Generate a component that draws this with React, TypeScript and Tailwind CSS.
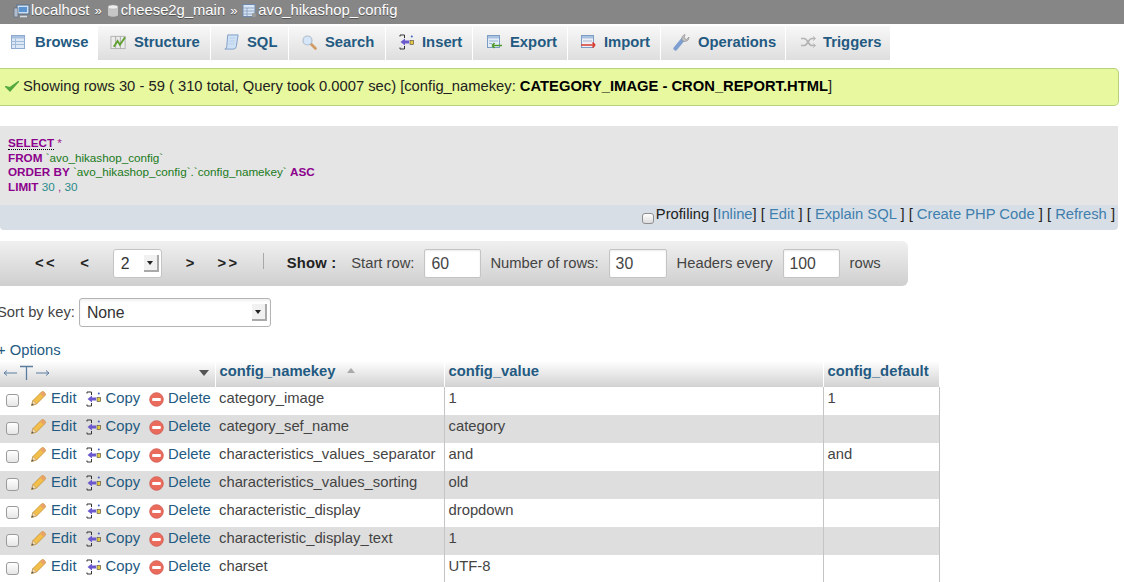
import React from "react";

const PencilIcon = () => (
  <svg width="17" height="17" viewBox="0 0 17 17" className="shrink-0">
    <path d="M1.5 15.5 L3 10.5 L11.5 2 Q13 1 14.5 2.5 Q16 4 15 5.5 L6.5 14 Z" fill="#f2c04a" stroke="#c08a30" strokeWidth="0.8" />
    <path d="M1.5 15.5 L3 10.5 L6.5 14 Z" fill="#f3dcb0" stroke="#b89058" strokeWidth="0.6" />
    <path d="M11.5 2 Q13 1 14.5 2.5 Q16 4 15 5.5 L13.6 6.9 L10.1 3.4 Z" fill="#e9a36b" />
    <path d="M1.5 15.5 L2.2 13.2 L3.8 14.8 Z" fill="#555" />
  </svg>
);

const CopyIcon = () => (
  <svg width="16" height="16" viewBox="0 0 16 16" className="shrink-0">
    <path d="M1 1 H5.5 V4 M5.5 12 V15 H1 M1 1 V2.5 M1 13.5 V15" stroke="#333" strokeWidth="1" fill="none" />
    <path d="M1.5 8 L6 4.5 V6.6 H10 V9.4 H6 V11.5 Z" fill="#6a5acd" />
    <rect x="11" y="6.5" width="3.6" height="4" fill="#e8c840" stroke="#444" strokeWidth="0.6" />
    <circle cx="12.8" cy="2.5" r="1" fill="#4060c0" />
  </svg>
);

const DeleteIcon = () => (
  <svg width="15" height="15" viewBox="0 0 15 15" className="shrink-0">
    <circle cx="7.5" cy="7.5" r="6.8" fill="#ea6a5c" stroke="#cf5a50" strokeWidth="0.8" />
    <rect x="3.2" y="6.1" width="8.6" height="2.8" rx="0.6" fill="#fff" />
  </svg>
);

const icons: Record<string, React.ReactNode> = {
  Browse: (
    <svg width="16" height="16" viewBox="0 0 16 16">
      <rect x="1.5" y="1.5" width="13" height="13" fill="#dce8f6" stroke="#8faace" />
      <rect x="2" y="2" width="12" height="2.5" fill="#a9c2e0" />
      <path d="M1.5 7.5 H14.5 M1.5 10.5 H14.5 M5.5 4.5 V14.5" stroke="#a3bcd9" strokeWidth="1" />
    </svg>
  ),
  Structure: (
    <svg width="18" height="16" viewBox="0 0 18 16">
      <rect x="1" y="2" width="15" height="13" fill="#ececec" stroke="#b0b0b0" />
      <path d="M6 2 V15 M11 2 V15" stroke="#a8a8a8" />
      <path d="M4 13 L8 7 L10.5 11 L16 3" stroke="#5fa030" strokeWidth="2" fill="none" />
    </svg>
  ),
  SQL: (
    <svg width="18" height="18" viewBox="0 0 18 18">
      <path d="M5 1.5 H16 L14 14 Q13.5 16.5 11 16.5 H2 Q4 16 4 14 Z" fill="#cfe1f5" stroke="#7c9cc6" />
      <path d="M7 5 H13 M6.5 8 H12.5 M6 11 H12" stroke="#b6cde8" />
    </svg>
  ),
  Search: (
    <svg width="16" height="16" viewBox="0 0 16 16">
      <path d="M9.5 9.5 L14.5 14.5" stroke="#d09a62" strokeWidth="2.6" strokeLinecap="round" />
      <circle cx="6.5" cy="6.5" r="4.5" fill="#d4e6f8" stroke="#b0bccb" strokeWidth="1.2" />
    </svg>
  ),
  Insert: <CopyIcon />,
  Export: (
    <svg width="17" height="16" viewBox="0 0 17 16">
      <rect x="1.5" y="1.5" width="12" height="12" fill="#e4eef8" stroke="#7d9cc4" />
      <rect x="2" y="2" width="11" height="2.5" fill="#a9c2e0" />
      <path d="M3 7 H12 M3 9.5 H6" stroke="#9ab4d4" />
      <path d="M16 11.5 H6 M6 11.5 L8.5 9 M6 11.5 L8.5 14" stroke="#4e9a2e" strokeWidth="1.7" fill="none" />
    </svg>
  ),
  Import: (
    <svg width="17" height="16" viewBox="0 0 17 16">
      <rect x="1.5" y="1.5" width="12" height="12" fill="#eef0f6" stroke="#7d9cc4" />
      <rect x="2" y="2" width="11" height="2.5" fill="#a9c2e0" />
      <path d="M3 7 H12" stroke="#a8b4cc" />
      <path d="M1 11 H15 M15 11 L12.5 8.5 M15 11 L12.5 13.5" stroke="#d83c30" strokeWidth="1.7" fill="none" />
    </svg>
  ),
  Operations: (
    <svg width="17" height="18" viewBox="0 0 17 18">
      <path d="M2.5 15.5 L9.5 7" stroke="#7e9fd0" strokeWidth="4.2" strokeLinecap="round" />
      <path d="M9 7 Q8 3 12 1.5 L11 5 L13.5 6.5 L16 4 Q16 8.5 11 8.5 Z" fill="#c4c4c4" stroke="#8f8f8f" strokeWidth="0.7" />
    </svg>
  ),
  Triggers: (
    <svg width="16" height="14" viewBox="0 0 16 14">
      <path d="M1 3.5 H4 Q6 3.5 8 7 Q10 10.5 12 10.5 H15 M1 10.5 H4 Q6 10.5 8 7 Q10 3.5 12 3.5 H15" stroke="#b4b4b4" strokeWidth="1.6" fill="none" />
      <path d="M13 1.5 L15.5 3.5 L13 5.5 M13 8.5 L15.5 10.5 L13 12.5" stroke="#b4b4b4" fill="none" />
    </svg>
  ),
};

const tabs = [
  { name: "Browse", w: "w-[98px]", gap: "gap-[9px]", pl: "pl-[9px]", active: true },
  { name: "Structure", w: "w-[113px]", gap: "gap-[7px]", pl: "pl-[12px]" },
  { name: "SQL", w: "w-[78px]", gap: "gap-[7px]", pl: "pl-[12px]" },
  { name: "Search", w: "w-[97px]", gap: "gap-[8px]", pl: "pl-[11px]" },
  { name: "Insert", w: "w-[87px]", gap: "gap-[7px]", pl: "pl-[12px]" },
  { name: "Export", w: "w-[95px]", gap: "gap-[7px]", pl: "pl-[13px]" },
  { name: "Import", w: "w-[93px]", gap: "gap-[7px]", pl: "pl-[12px]" },
  { name: "Operations", w: "w-[125px]", gap: "gap-[8px]", pl: "pl-[12px]" },
  { name: "Triggers", w: "w-[105px]", gap: "gap-[7px]", pl: "pl-[13px]" },
];

const rows = [
  ["category_image", "1", "1"],
  ["category_sef_name", "category", ""],
  ["characteristics_values_separator", "and", "and"],
  ["characteristics_values_sorting", "old", ""],
  ["characteristic_display", "dropdown", ""],
  ["characteristic_display_text", "1", ""],
  ["charset", "UTF-8", ""],
];

const SelectArrow = () => (
  <span className="flex h-[17px] w-[15px] items-center justify-center border-r-2 border-b-2 border-[#a9a9a9] bg-[#f1f1f1]">
    <span className="h-0 w-0 border-x-[3px] border-t-[4px] border-x-transparent border-t-[#222]" />
  </span>
);

const Field = ({ value, w }: { value: string; w: string }) => (
  <span className={`flex h-[29px] ${w} items-center rounded-[2px] border border-[#c4c4c4] bg-white pl-[6px] text-[15.8px] text-[#444] shadow-[inset_0_1px_2px_rgba(0,0,0,0.08)]`}>
    {value}
  </span>
);

const Check = () => (
  <span className="block h-[13px] w-[13px] rounded-[3px] border border-[#9b9b9b] bg-gradient-to-b from-white to-[#e6e6e6]" />
);

export default function App() {
  return (
    <div className="h-[582px] w-[1124px] overflow-hidden bg-white font-['Liberation_Sans',Arial,sans-serif] text-[#444]">
      {/* Breadcrumb */}
      <div className="flex h-[24px] items-center bg-[#868686] pb-[3px] pl-[13px] text-[14.8px] text-white [text-shadow:0_1px_0_#555]">
        <svg width="17" height="16" viewBox="0 0 17 16" className="mr-[1px] shrink-0">
          <rect x="4" y="2" width="12" height="9" fill="#cfe0f4" stroke="#54708f" />
          <rect x="6" y="4" width="8" height="5" fill="#5a94d0" />
          <rect x="1" y="5" width="4" height="9" fill="#b0bccb" stroke="#5e6c7c" strokeWidth="0.7" />
          <path d="M7 13.5 H14" stroke="#d5dce4" strokeWidth="1.5" />
        </svg>
        <span>localhost</span>
        <span className="mx-[5px] text-[13px]">»</span>
        <svg width="12" height="14" viewBox="0 0 12 14" className="mr-[2px] shrink-0">
          <path d="M1 3 V11.5 Q6 14 11 11.5 V3 Z" fill="#c6c6c6" />
          <ellipse cx="6" cy="3" rx="5" ry="2" fill="#eeeeee" stroke="#aaa" strokeWidth="0.5" />
        </svg>
        <span>cheese2g_main</span>
        <span className="mx-[5px] text-[13px]">»</span>
        <svg width="15" height="15" viewBox="0 0 15 15" className="mr-[1px] shrink-0">
          <rect x="1" y="1.5" width="12" height="12" fill="#d9e6f5" stroke="#6d88ab" />
          <path d="M1 5 H13 M1 8 H13 M1 11 H13 M5 5 V13" stroke="#8ea6c4" />
          <circle cx="12" cy="12" r="2.2" fill="#9a9a9a" />
        </svg>
        <span>avo_hikashop_config</span>
      </div>

      {/* Tabs */}
      <div className="mt-[2px] flex h-[34px] items-stretch bg-white">
        {tabs.map((t) => (
          <div
            key={t.name}
            className={`flex ${t.w} ${t.gap} ${t.pl} items-center border-r border-white pb-[2px] text-[14.8px] font-bold text-[#235a81] ${
              t.active ? "bg-white" : "bg-gradient-to-b from-[#f8f8f8] to-[#dedede]"
            }`}
          >
            <span className="flex w-[17px] shrink-0 justify-center">{icons[t.name]}</span>
            <span>{t.name}</span>
          </div>
        ))}
      </div>

      {/* Success message */}
      <div className="mt-[8px] flex h-[38px] w-[1119px] items-center rounded-br-[5px] rounded-tr-[5px] border-y border-r border-[#b6d27c] bg-[#e8f89e] pb-[2px] pl-[4px] text-[14.76px] text-[#222]">
        <svg width="16" height="14" viewBox="0 0 16 14" className="mr-[3px] shrink-0">
          <path d="M1.5 7.5 L6 12 L14.5 2.5 L6 8.5 Z" fill="#53a93f" stroke="#53a93f" strokeWidth="1.2" strokeLinejoin="round" />
        </svg>
        <span>
          Showing rows 30 - 59 ( 310 total, Query took 0.0007 sec) [config_namekey: <b className="text-black">CATEGORY_IMAGE - CRON_REPORT.HTML</b>]
        </span>
      </div>

      {/* SQL box */}
      <div className="mt-[20px] w-[1118px]">
        <div className="h-[79px] bg-[#e5e5e5] pl-[8px] pt-[10px] text-[11.7px] leading-[14.67px]">
          <div>
            <b className="border-b border-dotted border-black text-[#8c008c]">SELECT</b>
            <span className="text-[#a0208c]"> *</span>
          </div>
          <div className="text-[#1a7a1a]">
            <b className="text-[#8c008c]">FROM</b> `avo_hikashop_config`
          </div>
          <div className="text-[#1a7a1a]">
            <b className="text-[#8c008c]">ORDER BY</b> `avo_hikashop_config`.`config_namekey` <b className="text-[#8c008c]">ASC</b>
          </div>
          <div className="text-[#2a8a8a]">
            <b className="text-[#8c008c]">LIMIT</b> 30 <span className="text-[#a0208c]">,</span> 30
          </div>
        </div>
        <div className="flex h-[25px] items-center justify-end rounded-b-[4px] bg-[#d7dee6] pb-[6px] pr-[3px] text-[14.76px] text-[#222]">
          <span className="mr-[2px] mt-[8px] block h-[11px] w-[12px] rounded-[3px] border border-[#8e8e8e] bg-gradient-to-b from-white to-[#dcdcdc]" />
          <span>
            Profiling [<span className="text-[#3f7fad]">Inline</span>] [ <span className="text-[#3f7fad]">Edit</span> ] [ <span className="text-[#3f7fad]">Explain SQL</span> ] [ <span className="text-[#3f7fad]">Create PHP Code</span> ] [ <span className="text-[#3f7fad]">Refresh</span> ]
          </span>
        </div>
      </div>

      {/* Navigation */}
      <div className="mt-[11px] flex h-[45px] w-[908px] items-center rounded-r-[6px] bg-gradient-to-b from-[#f0f0f0] to-[#cfcfcf] pl-[35px] text-[14.76px]">
        <b className="tracking-[2.5px] text-[#222]">&lt;&lt;</b>
        <b className="ml-[23px] text-[#222]">&lt;</b>
        <span className="ml-[24px] flex h-[29px] w-[49px] items-center justify-between rounded-[3px] border border-[#c4c4c4] bg-white pl-[7px] pr-[2px] text-[15.8px] text-[#333]">
          2
          <SelectArrow />
        </span>
        <b className="ml-[24px] text-[#222]">&gt;</b>
        <b className="ml-[23px] tracking-[2.5px] text-[#222]">&gt;&gt;</b>
        <span className="mb-[6px] ml-[23px] h-[16px] w-[1px] bg-[#a8a8a8]" />
        <b className="ml-[23px] tracking-[0.2px] text-[#222]">Show :</b>
        <span className="ml-[15px]">Start row:</span>
        <span className="ml-[10px]"><Field value="60" w="w-[57px]" /></span>
        <span className="ml-[9px]">Number of rows:</span>
        <span className="ml-[10px]"><Field value="30" w="w-[58px]" /></span>
        <span className="ml-[10px]">Headers every</span>
        <span className="ml-[10px]"><Field value="100" w="w-[57px]" /></span>
        <span className="ml-[10px]">rows</span>
      </div>

      {/* Sort */}
      <div className="-ml-[3px] mt-[12px] flex h-[29px] items-center text-[14.76px]">
        <span>Sort by key:</span>
        <span className="ml-[4px] flex h-[29px] w-[192px] items-center justify-between rounded-[3px] border border-[#b4b4b4] bg-white pl-[7px] pr-[3px] text-[15.8px] text-[#333] shadow-[inset_0_2px_3px_rgba(0,0,0,0.06)]">
          None
          <SelectArrow />
        </span>
      </div>

      {/* Options */}
      <div className="-ml-[3px] mt-[14px] h-[20px] text-[14.76px] leading-[18px] text-[#235a81]">+ Options</div>

      {/* Table */}
      <table className="w-[939px] table-fixed border-collapse text-[14.8px] leading-[20px]">
        <colgroup>
          <col className="w-[215px]" />
          <col className="w-[229px]" />
          <col className="w-[379px]" />
          <col className="w-[116px]" />
        </colgroup>
        <thead>
          <tr className="h-[26px] bg-gradient-to-b from-white to-[#d2d2d2] text-left font-bold text-[#235a81]">
            <th className="border-r border-white p-0 pb-[3px]">
              <div className="flex items-center justify-between pl-[3px] pr-[6px]">
                <svg width="47" height="16" viewBox="0 0 47 16">
                  <path d="M1 8 H14 M1 8 L4 5.5 M1 8 L4 10.5 M46 8 H33 M46 8 L43 5.5 M46 8 L43 10.5" stroke="#5a7da0" fill="none" />
                  <path d="M17 1.5 H30 M23.5 1.5 V15" stroke="#5a7da0" strokeWidth="1.3" fill="none" />
                </svg>
                <span className="h-0 w-0 border-x-[5px] border-t-[6px] border-x-transparent border-t-[#555]" />
              </div>
            </th>
            <th className="border-r border-white p-0 pb-[7px] pl-[4px] font-bold leading-[18px]">
              <span className="flex items-center">
                config_namekey
                <span className="ml-[12px] h-0 w-0 border-x-[4px] border-b-[5px] border-x-transparent border-b-[#aaa]" />
              </span>
            </th>
            <th className="border-r border-white p-0 pb-[7px] pl-[4px] font-bold leading-[18px]">config_value</th>
            <th className="p-0 pb-[7px] pl-[4px] font-bold leading-[18px]">config_default</th>
          </tr>
        </thead>
        <tbody>
          {rows.map((r, i) => (
            <tr key={r[0]} className={`h-[28px] ${i % 2 ? "bg-[#dedede]" : "bg-white"}`}>
              <td className="p-0">
                <div className="flex h-[28px] items-center pl-[6px] text-[#235a81]">
                  <span className="mb-[1px]"><Check /></span>
                  <span className="mb-[6px] ml-[11px]"><PencilIcon /></span>
                  <span className="mb-[6px] ml-[4px]">Edit</span>
                  <span className="mb-[4px] ml-[9px]"><CopyIcon /></span>
                  <span className="mb-[6px] ml-[4px]">Copy</span>
                  <span className="mb-[4px] ml-[9px]"><DeleteIcon /></span>
                  <span className="mb-[6px] ml-[4px]">Delete</span>
                </div>
              </td>
              <td className="border-r border-[#c4c4c4] p-0 pb-[6px] pl-[4px]">{r[0]}</td>
              <td className="border-r border-[#c4c4c4] p-0 pb-[6px] pl-[4px]">{r[1]}</td>
              <td className="border-r border-[#c4c4c4] p-0 pb-[6px] pl-[4px]">{r[2]}</td>
            </tr>
          ))}
        </tbody>
      </table>
    </div>
  );
}
